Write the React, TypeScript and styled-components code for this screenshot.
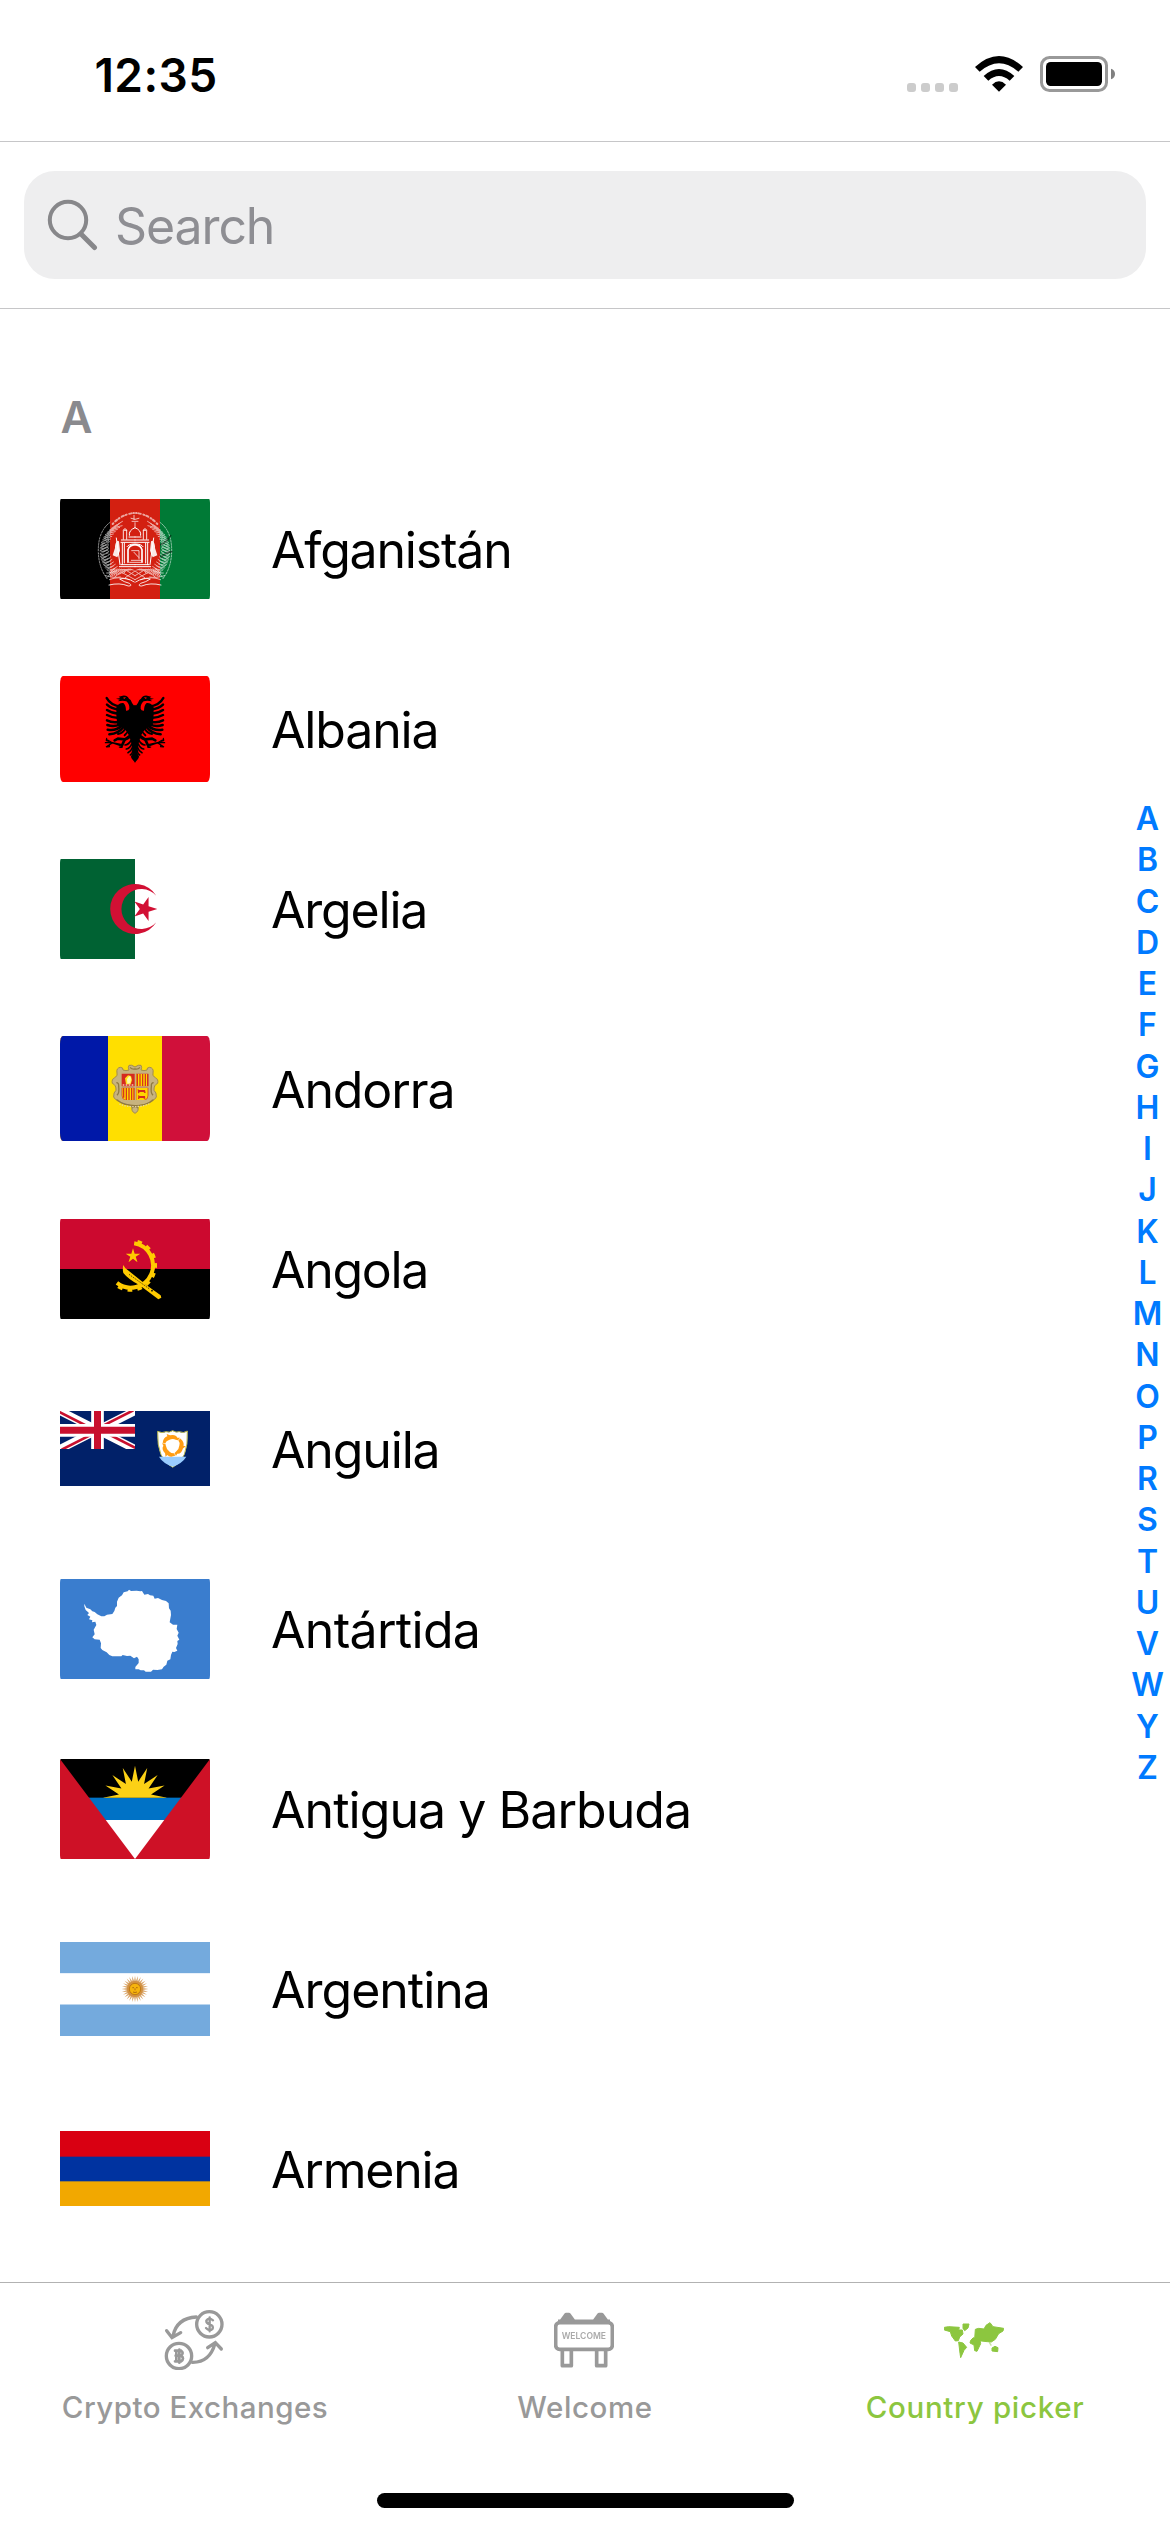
import React from "react";
import styled, { createGlobalStyle } from "styled-components";

const GlobalStyle = createGlobalStyle`
  * { box-sizing: border-box; }
  body { margin: 0; background: #fff; }
`;

const Screen = styled.main`
  width: 1170px;
  height: 2532px;
  display: flex;
  flex-direction: column;
  overflow: hidden;
  background: #fff;
  color: #000;
  font-family: Inter, "Liberation Sans", sans-serif;
`;

const StatusBar = styled.header`
  height: 142px;
  flex: none;
  display: flex;
  align-items: flex-start;
  justify-content: space-between;
  padding: 45px 55px 0 94.5px;
  border-bottom: 1px solid #c6c6c8;
`;

const Clock = styled.time`
  font-size: 46px;
  line-height: 60px;
  font-weight: 600;
  letter-spacing: 0.4px;
`;

const StatusIcons = styled.div`
  display: flex;
  align-items: center;
  gap: 17px;
  height: 58px;
`;

const SignalDots = styled.div`
  display: flex;
  gap: 5px;
  padding-top: 26px;
`;

const SignalDot = styled.i`
  width: 9px;
  height: 9px;
  border-radius: 3px;
  background: #ccc;
`;

const SearchArea = styled.div`
  height: 167px;
  flex: none;
  padding: 29px 24px;
  border-bottom: 1px solid #c6c6c8;
`;

const SearchField = styled.label`
  height: 108px;
  display: flex;
  align-items: center;
  gap: 16px;
  padding-left: 23px;
  border-radius: 31px;
  background: #eeeeef;
`;

const SearchText = styled.span`
  font-size: 50px;
  line-height: 60px;
  padding-top: 1px;
  letter-spacing: -1.1px;
  color: #8e8e93;
`;

const Content = styled.div`
  flex: 1;
  min-height: 0;
  display: flex;
`;

const CountryList = styled.section`
  flex: 1;
  padding-left: 60px;
`;

const SectionTitle = styled.h2`
  margin: 0;
  height: 150px;
  padding: 79px 0 0 0.5px;
  font-size: 44px;
  line-height: 58px;
  font-weight: 600;
  color: #8a8a8e;
`;

const CountryRow = styled.div`
  height: 180px;
  display: flex;
  align-items: center;
  gap: 61px;
`;

const FlagFrame = styled.div<{ $h: number; $corner: string }>`
  width: 150px;
  height: ${(p) => p.$h}px;
  margin-bottom: ${(p) => p.$h % 2}px;
  flex: none;
  overflow: hidden;
  border-radius: ${(p) => p.$corner};

  svg {
    display: block;
    width: 100%;
    height: 100%;
  }
`;

const CountryName = styled.span<{ $track: number }>`
  font-size: 50px;
  line-height: 60px;
  padding-top: 2px;
  white-space: nowrap;
  letter-spacing: ${(p) => p.$track}px;
`;

const IndexRail = styled.nav`
  width: 45px;
  flex: none;
  display: flex;
  flex-direction: column;
  align-items: center;
  padding-top: 489px;
`;

const IndexLetter = styled.span`
  height: 41.25px;
  font-size: 32px;
  line-height: 41.25px;
  font-weight: 600;
  color: #007aff;
`;

const TabBar = styled.footer`
  height: 250px;
  flex: none;
  display: flex;
  flex-direction: column;
  align-items: center;
  justify-content: space-between;
  padding-bottom: 24px;
  border-top: 1px solid #b2b2b2;
`;

const Tabs = styled.div`
  width: 100%;
  display: grid;
  grid-template-columns: repeat(3, 390px);
`;

const Tab = styled.div<{ $active?: boolean }>`
  display: flex;
  flex-direction: column;
  align-items: center;
  padding-top: 27px;
  color: ${(p) => (p.$active ? "#8cc63f" : "#999")};

  svg {
    display: block;
    width: 60px;
    height: 60px;
    margin-right: 2px;
    filter: blur(0.7px);
  }
`;

const TabLabel = styled.span<{ $track: number }>`
  margin-top: 19px;
  font-size: 29.5px;
  line-height: 36px;
  font-weight: 500;
  letter-spacing: ${(p) => p.$track}px;
  white-space: nowrap;
`;

const HomeIndicator = styled.div`
  width: 417px;
  height: 15px;
  border-radius: 8px;
  background: #000;
`;

const polar = (cx: number, cy: number, r: number, deg: number) => {
  const a = (deg * Math.PI) / 180;
  return `${(cx + r * Math.cos(a)).toFixed(1)},${(cy + r * Math.sin(a)).toFixed(1)}`;
};

const starPoints = (cx: number, cy: number, outer: number, inner: number, tips: number, start: number) =>
  Array.from({ length: tips * 2 }, (_, i) =>
    polar(cx, cy, i % 2 ? inner : outer, start + (i * 180) / tips)
  ).join(" ");

const MirrorX = ({ children }: { children: React.ReactNode }) => (
  <>
    {children}
    <g transform="translate(450 0) scale(-1 1)">{children}</g>
  </>
);

const Afghanistan = () => (
  <svg viewBox="0 0 450 300" preserveAspectRatio="none">
    <rect width="150" height="300" fill="#000" />
    <rect x="150" width="150" height="300" fill="#d32011" />
    <rect x="300" width="150" height="300" fill="#007a36" />
    <g fill="none" stroke="#fff" strokeLinecap="round">
      <MirrorX>
        <g strokeWidth="3" opacity=".6">
          {Array.from({ length: 19 }, (_, i) => {
            const a = ((138 + i * 5.3) * Math.PI) / 180;
            const x = 225 + 105 * Math.cos(a);
            const y = 156 + 92 * Math.sin(a);
            return <path key={i} d={`M${x} ${y}l16 -8 M${x + 2} ${y + 3}l22 -5 M${x + 6} ${y - 3}l19 -12`} />;
          })}
          <path d="M150 70Q116 96 115 150T142 240" strokeDasharray="5 4" />
        </g>
        <path d="M118 110q12 20 30 27M115 158q16 2 32 16" stroke="#000" strokeWidth="5" opacity=".45" />
        <path d="M158 75Q184 46 222 42" strokeWidth="6" strokeDasharray="3 8 7 6" opacity=".6" />
        <path d="M169 117L180 197" strokeWidth="3" />
        <path d="M172 125q-8 8-7 22l-7 22 14 6 8-20-3-28z" fill="#fff" stroke="none" opacity=".9" />
        <path d="M184 123h41M183 130h42M187 132v65M193 132v60M201 143q5-8 22-8M183 197h42M178 203h47" strokeWidth="3" />
        <path d="M204 190v-38q5-14 21-15" strokeWidth="5" />
        <path d="M190 121v-27q5-10 10 0v27M192 94h8" strokeWidth="3" opacity=".85" />
        <path d="M207 114h18M208 109q-3-15 17-23" strokeWidth="3" />
        <g strokeWidth="3" opacity=".65">
          {Array.from({ length: 9 }, (_, i) => (
            <path key={i} d={`M${144 + i * 6} ${234 - i * 1.5}q8 -18 ${20 + i} -${25 - i * 2}`} />
          ))}
          <path d="M140 222h30M136 230q28 8 45 4M148 242q28-12 60 0M160 238q25-24 52-26M195 212l30 18M185 220l40 22M196 236l29-20" />
        </g>
        <path d="M147 258q32-8 58 3 14 0 3-8-16-4-29-13 20-6 44 9" strokeWidth="3" opacity=".85" />
      </MirrorX>
      <path d="M225 85v-14M213 58q12 7 24 0M216 67h18M222 49v12" strokeWidth="3" opacity=".7" />
      <path d="M215 155h22v25M222 160l14 15M214 184h30M209 190h34" strokeWidth="3" opacity=".75" />
    </g>
  </svg>
);

const Albania = () => (
  <svg viewBox="0 0 450 318" preserveAspectRatio="none">
    <rect width="450" height="318" fill="#f00" />
    <MirrorX>
      <path
        d="M168 68L181 66 176 62 188 59Q201 57 207 68L212 72Q216 82 221 88H226V260L219 253Q212 246 213 241L218 232 214 202 208 180Q200 163 186 153L172 150Q168 120 169 94 176 80 190 81 198 88 198 104 206 105 208 98 209 84 199 76L188 74 173 76 180 71Z"
        fill="#000"
      />
      <path d="M189 65l9-2-5 6z" fill="#f00" />
      <g fill="none" stroke="#000" strokeWidth="7.5" strokeLinecap="round">
        <path d="M182 92Q151 87 140 66" />
        <path d="M176 101Q154 98 141 86" />
        <path d="M176 113Q156 112 141 102" />
        <path d="M176 126Q157 126 141 117" />
        <path d="M178 137Q158 142 141 133" />
        <path d="M180 145Q162 154 142 147" />
        <path d="M184 150Q168 165 143 161" />
        <path d="M190 153Q176 173 148 175" />
        <path d="M197 155Q190 172 174 174" strokeWidth="6" />
        <path d="M207 157Q205 168 194 178" strokeWidth="6" />
        <g strokeWidth="5">
          <path d="M214 180Q206 190 192 192M214 192Q206 206 195 207M215 204Q210 217 199 219M217 215Q213 226 204 230M219 224Q217 234 211 237" />
        </g>
        <path d="M209 180L194 191 185 210 M194 190L174 188 164 193" strokeWidth="8" />
        <g strokeWidth="3.5">
          <path d="M184 210L158 201 139 190M182 205L158 200 139 212M136 200H157M140 187l-1 7 8 2M140 213l8-1 1-7M178 213q6 3 9 0" />
        </g>
      </g>
    </MirrorX>
  </svg>
);

const Algeria = () => (
  <svg viewBox="0 0 450 300" preserveAspectRatio="none">
    <rect width="450" height="300" fill="#fff" />
    <rect width="225" height="300" fill="#006233" />
    <path d="M289 110A75 75 0 1 0 289 190A60 60 0 1 1 289 110Z" fill="#d21034" />
    <polygon points={starPoints(254, 150, 38, 14.5, 5, 0)} fill="#d21034" />
  </svg>
);

const Andorra = () => (
  <svg viewBox="0 0 450 315" preserveAspectRatio="none">
    <rect width="450" height="315" fill="#d0103a" />
    <rect width="306" height="315" fill="#ffdf00" />
    <rect width="144" height="315" fill="#0018a8" />
    <path
      d="M207 88q7-3 18 5 11-8 18-5 4 5 0 14 9 4 18 0-1-8 8-8 13 2 10 17-4 8 7 14 10 5 7 17-12 5-11 21 8 6 7 20-3 9-15 10-5 9-20 12-19 1-20 8 3 13-9 19-12-6-9-19-1-7-20-8-15-3-20-12-12-1-15-10-1-14 7-20 1-16-11-21-3-12 7-17 11-6 7-14-3-15 10-17 9 0 8 8 9 4 18 0-4-9 0-14z"
      fill="#c7b37f"
      stroke="#a18b50"
      strokeWidth="3"
    />
    <path d="M210 94q6 7 15 5 9 2 15-5M169 140q8 0 7 12 3 18-5 26M281 140q-8 0-7 12-3 18 5 26M170 192q22 16 55 17t55-17M216 216q9-9 18 0" fill="none" stroke="#8f7a42" strokeWidth="4" />
    <path d="M178 204q20 8 45 8t48-10" fill="none" stroke="#e6d6a4" strokeWidth="4" strokeDasharray="4 4" />
    <path d="M183 111H267V178Q267 194 252 194H198Q183 194 183 178Z" fill="#d52b1e" stroke="#c7b37f" strokeWidth="4" />
    <rect x="187" y="114" width="36" height="37" fill="#d52b1e" />
    <path d="M198 145l-3-18 9-9 9 2 3 12-4 13z" fill="#ffe21a" />
    <path d="M201 129l7-9 5 5-2 17-9 1z" fill="#fff6b0" />
    <path d="M188 147h34" stroke="#f6c9b6" strokeWidth="4" strokeDasharray="5 4" />
    <rect x="229" y="114" width="34" height="37" fill="#ffd600" />
    <path d="M232 114v37M240 114v37M248 114v37M256 114v37M263 114v37" stroke="#d52b1e" strokeWidth="3.6" />
    <path d="M187 156h36v36h-24q-12-1-12-14z" fill="#ffd600" />
    <path d="M191 156v29M199 156v36M207 156v36M215 156v36M222 156v36" stroke="#d52b1e" strokeWidth="3.6" />
    <path d="M229 156h34v22q0 13-12 14h-22z" fill="#ffd600" />
    <path d="M233 158l4 4h18l2 9h-4l-2-3h-12l-2 4h-3zM235 177l4 3h16l1 8h-4l-2-2h-11l-2 3h-3z" fill="#d52b1e" />
    <path d="M183 153H267M226 111V194" stroke="#c7b37f" strokeWidth="4" />
  </svg>
);

const Angola = () => {
  const at = (r: number, d: number) => polar(212, 139, r, d);
  return (
    <svg viewBox="0 0 450 300" preserveAspectRatio="none">
      <rect width="450" height="150" fill="#cc092f" />
      <rect y="150" width="450" height="150" fill="#000" />
      <g fill="none" stroke="#ffcb00">
        <path d={`M${at(67, -81)}A67 67 0 1 1 ${at(67, 128)}`} strokeWidth="12" />
        <path d={`M${at(74, -74)}A74 74 0 1 1 ${at(74, 132)}`} strokeWidth="10" strokeDasharray="14 15.5" />
      </g>
      <polygon points={starPoints(219, 111, 23, 8.5, 5, -90)} fill="#ffcb00" />
      <path d="M190 138Q187 150 190 162 206 182 238 198L295 241 304 236 302 229 262 200 204 154Q194 148 190 138Z" fill="#ffcb00" />
      <path d="M207 166L270 211" stroke="#3b2c00" strokeWidth="2.5" strokeDasharray="4 3" />
      <circle cx="276" cy="215" r="2.5" />
    </svg>
  );
};

const Anguilla = () => (
  <svg viewBox="0 0 450 225" preserveAspectRatio="none">
    <rect width="450" height="225" fill="#012169" />
    <clipPath id="canton">
      <rect width="225" height="114" />
    </clipPath>
    <g clipPath="url(#canton)" fill="none">
      <path d="M0 0L225 114M225 0L0 114" stroke="#fff" strokeWidth="24" />
      <path d="M-4 2L110 60M112 53L220 -2M229 112L115 54M113 61L5 116" stroke="#c8102e" strokeWidth="8" />
      <path d="M112.500 0V114M0 58H225" stroke="#fff" strokeWidth="38" />
      <path d="M112.500 0V114M0 58H225" stroke="#c8102e" strokeWidth="21" />
    </g>
    <path d="M293 61Q306 68 318 62 328 66 338 59 348 66 358 62 370 68 382 60 386 146 338 169 290 146 293 61Z" fill="#fff" stroke="#b9b84a" strokeWidth="3" />
    <path d="M297 137H379Q367 157 338 167 309 157 297 137Z" fill="#9cf" />
    <g fill="#ff9d14">
      {[0, 120, 240].map((turn) => (
        <path
          key={turn}
          transform={`rotate(${turn} 338 104)`}
          d="M308 95Q311 78 322 76L320 69 330 73Q347 69 352 80L360 80 354 88 347 86Q338 82 327 87 318 90 316 97Z"
        />
      ))}
    </g>
  </svg>
);

const Antarctica = () => (
  <svg viewBox="0 0 450 300" preserveAspectRatio="none">
    <rect width="450" height="300" fill="#3a7dce" />
    <path
      d="M73 74L79 86 91 91 97 97 104 99 112 106 124 112 133 112 141 107 157 105 163 96 166 86 171 81 171 68 176 56 186 49 191 40 203 37 207 32 213 36 230 35 241 37 246 36 253 47 264 45 270 49 280 50 284 59 294 57 306 63 318 66 326 73 327 88 332 95 333 108 329 130 339 137 352 137 350 150 356 161 352 170 358 182 352 186 353 195 348 207 352 215 343 219 337 218 333 228 331 241 322 245 319 257 311 263 306 271 292 273 279 272 273 278 257 278 252 274 242 274 236 271 226 271 226 264 236 252 236 241 231 233 222 238 211 230 201 231 188 228 184 232 157 232 148 228 140 220 127 213 122 207 123 193 119 182 104 181 97 175 104 166 101 152 109 138 106 128 96 130 97 124 87 121 91 113 82 108 87 102 77 93 73 82Z"
      fill="#fff"
    />
  </svg>
);

const Antigua = () => (
  <svg viewBox="0 0 450 300" preserveAspectRatio="none">
    <rect width="450" height="300" fill="#fff" />
    <rect width="450" height="117" fill="#000" />
    <rect y="116" width="450" height="67" fill="#0072c6" />
    <clipPath id="aboveHorizon">
      <rect width="450" height="116" />
    </clipPath>
    <polygon points={starPoints(225, 116, 96, 49, 16, -90)} fill="#fcd116" clipPath="url(#aboveHorizon)" />
    <path d="M0 0L225 300H0ZM450 0L225 300H450Z" fill="#ce1126" />
  </svg>
);

const Argentina = () => (
  <svg viewBox="0 0 450 282" preserveAspectRatio="none">
    <rect width="450" height="282" fill="#74aadd" />
    <rect y="93.500" width="450" height="94" fill="#fff" />
    <polygon points={starPoints(225, 141, 40, 24, 28, -90)} fill="#d9a66b" />
    <circle cx="225" cy="141" r="24" fill="#cf8a34" opacity=".75" />
    <circle cx="225" cy="141" r="17" fill="#f6b40e" stroke="#c07a12" strokeWidth="3" />
    <path d="M217 137h5M228 137h5M225 139v6M219 150q6 3 12 0" fill="none" stroke="#a5600d" strokeWidth="2.500" />
  </svg>
);

const Armenia = () => (
  <svg viewBox="0 0 450 225" preserveAspectRatio="none">
    <rect width="450" height="225" fill="#f2a800" />
    <rect width="450" height="151" fill="#0033a0" />
    <rect width="450" height="77" fill="#d90012" />
  </svg>
);

const COUNTRIES = [
  { name: "Afganistán", flag: Afghanistan, h: 100, corner: "1px / 5px", track: -1.2 },
  { name: "Albania", flag: Albania, h: 106, corner: "3px / 8px", track: -1.15 },
  { name: "Argelia", flag: Algeria, h: 100, corner: "1px / 5px", track: -1.2 },
  { name: "Andorra", flag: Andorra, h: 105, corner: "3px / 8px", track: -1.1 },
  { name: "Angola", flag: Angola, h: 100, corner: "1px / 5px", track: -1.3 },
  { name: "Anguila", flag: Anguilla, h: 75, corner: "0", track: -1.15 },
  { name: "Antártida", flag: Antarctica, h: 100, corner: "1px / 5px", track: -0.7 },
  { name: "Antigua y Barbuda", flag: Antigua, h: 100, corner: "1px / 5px", track: -0.95 },
  { name: "Argentina", flag: Argentina, h: 94, corner: "0", track: -1.0 },
  { name: "Armenia", flag: Armenia, h: 75, corner: "0", track: -1.2 },
];

const WifiIcon = () => (
  <svg width="48" height="36" viewBox="0 0 144 108">
    <path d="M0 33Q72 -33 144 33L130 47Q72 -4 14 47Z" />
    <path d="M26 60Q72 18 118 60L104 74Q72 46 40 74Z" />
    <path d="M51 86Q72 66 93 86L72 107Z" />
  </svg>
);

const BatteryIcon = () => (
  <svg width="75" height="36" viewBox="0 0 225 108">
    <rect x="4.500" y="4.500" width="195" height="99" rx="24" fill="none" stroke="#999" strokeWidth="9" />
    <rect x="18" y="18" width="168" height="72" rx="14" />
    <path d="M213 38Q225 42 225 54T213 70Z" fill="#808080" />
  </svg>
);

const SearchIcon = () => (
  <svg width="52" height="52" viewBox="0 0 52 52" fill="none" stroke="#87878a" strokeLinecap="round">
    <circle cx="21" cy="21" r="18.200" strokeWidth="4" />
    <path d="M34 35L47.500 48.500" strokeWidth="5" />
  </svg>
);

const ExchangeIcon = () => (
  <svg viewBox="0 0 180 180" fill="none" stroke="currentColor" strokeWidth="10" strokeLinecap="round">
    <circle cx="136" cy="43" r="38" />
    <circle cx="45" cy="138" r="38" />
    <path d="M97 21Q38 24 27 78M8 62L24 83 50 68M85 157Q137 158 153 101M131 113L154 98 172 117" />
    <path d="M147 31Q134 20 127 32 126 40 137 43 149 47 146 56 137 66 126 54M137 22V64" strokeWidth="7" />
    <path d="M33 122H51Q61 129 51 137H35M51 137Q63 145 51 154H33M37 122V154M46 119V158" strokeWidth="8" />
  </svg>
);

const SignText = styled.text`
  font-family: Inter, sans-serif;
  font-size: 27px;
  font-weight: 600;
  fill: #aaa;
`;

const WelcomeIcon = () => (
  <svg viewBox="0 0 180 180" fill="none" stroke="currentColor" strokeWidth="11" strokeLinejoin="round">
    <rect x="5" y="38" width="170" height="80" rx="12" />
    <path d="M12 33H168" strokeWidth="9" />
    <path d="M24 30L36 14H45L57 30ZM123 30L135 14H144L156 30Z" fill="currentColor" />
    <path d="M25 121V167H52V121M128 121V167H155V121" />
    <SignText x="23" y="87" textLength="133" lengthAdjust="spacingAndGlyphs" stroke="none">WELCOME</SignText>
  </svg>
);

const WorldIcon = () => (
  <svg viewBox="0 0 180 180" fill="currentColor" stroke="currentColor" strokeWidth="3" strokeLinejoin="round">
    <path d="M1 52L14 50 46 52 44 60 55 60 57 72 47 81 43 92 34 93 23 78 19 65 1 60Z" />
    <path d="M57 42L75 42 72 54 62 62 57 55Z" />
    <path d="M44 96L57 99 68 112 60 121 50 143 48 130Z" />
    <path d="M94 58L104 55 120 57 126 46 138 38 147 50 179 55 177 63 164 71 154 88 142 96 130 95 120 94 104 92 92 87Z" />
    <path d="M80 91L88 83 108 91 110 101 99 124 92 122 90 105 78 99Z" />
    <path d="M144 114L153 109 162 113 161 125 144 123Z" />
    <path d="M136 97l6 10" strokeWidth="4" opacity=".5" />
  </svg>
);

export default function App() {
  return (
    <Screen>
      <GlobalStyle />
      <StatusBar>
        <Clock>12:35</Clock>
        <StatusIcons>
          <SignalDots>
            {[0, 1, 2, 3].map((i) => (
              <SignalDot key={i} />
            ))}
          </SignalDots>
          <WifiIcon />
          <BatteryIcon />
        </StatusIcons>
      </StatusBar>
      <SearchArea>
        <SearchField>
          <SearchIcon />
          <SearchText>Search</SearchText>
        </SearchField>
      </SearchArea>
      <Content>
        <CountryList>
          <SectionTitle>A</SectionTitle>
          {COUNTRIES.map(({ name, flag: Flag, h, corner, track }) => (
            <CountryRow key={name}>
              <FlagFrame $h={h} $corner={corner}>
                <Flag />
              </FlagFrame>
              <CountryName $track={track}>{name}</CountryName>
            </CountryRow>
          ))}
        </CountryList>
        <IndexRail>
          {"ABCDEFGHIJKLMNOPRSTUVWYZ".split("").map((letter) => (
            <IndexLetter key={letter}>{letter}</IndexLetter>
          ))}
        </IndexRail>
      </Content>
      <TabBar>
        <Tabs>
          <Tab>
            <ExchangeIcon />
            <TabLabel $track={0.5}>Crypto Exchanges</TabLabel>
          </Tab>
          <Tab>
            <WelcomeIcon />
            <TabLabel $track={0.6}>Welcome</TabLabel>
          </Tab>
          <Tab $active>
            <WorldIcon />
            <TabLabel $track={0.7}>Country picker</TabLabel>
          </Tab>
        </Tabs>
        <HomeIndicator />
      </TabBar>
    </Screen>
  );
}
